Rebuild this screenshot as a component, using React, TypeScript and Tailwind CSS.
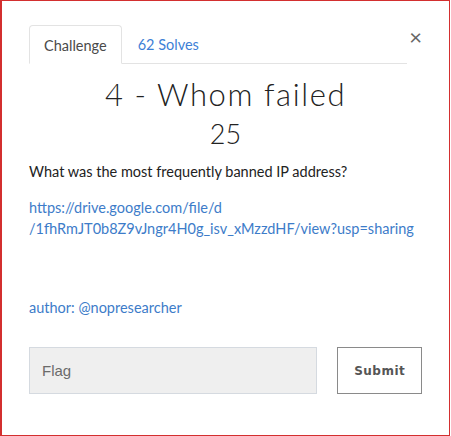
import * as React from 'react';

export default function App() {
  return (
    <div className="h-[436px] w-[451px] bg-white">
      <div className="h-[436px] w-[450px] border border-l-2 border-[#d32f2f] bg-white font-['Lato',sans-serif]">
        <div className="flex items-start pl-[27px] pr-[27px] pt-[24px]">
          {/* tabs */}
          <div className="flex w-[382px] border-b border-[#e3e3e3]">
            <div className="-mb-px rounded-t-[4px] border border-b-white border-[#e3e3e3] bg-white px-[14px] pb-[8px] pt-[11px] text-[14.5px] leading-[18px] text-[#4a4a4a]">
              Challenge
            </div>
            <div className="px-[16px] pb-[8px] pt-[11px] text-[14.5px] leading-[18px] text-[#3d7fd6]">62 Solves</div>
          </div>
          <button className="ml-[2px] mt-[1px] text-[22px] leading-[22px] text-[#666]">×</button>
        </div>

        <div className="px-[27px]">
          <h1 className="mt-[11px] text-center font-['Lato',sans-serif] text-[31px] font-light leading-[38px] tracking-[1.6px] text-[#222]">
            4 - Whom failed
          </h1>
          <div className="mt-[5px] text-center text-[27px] font-light leading-[32px] text-[#222]">25</div>

          <p className="mt-[12px] text-[14.5px] leading-[20px] text-[#222]">
            What was the most frequently banned IP address?
          </p>
          <p className="mt-[15px] break-all text-[14.5px] leading-[21px] text-[#3d7cc9]">
            https://drive.google.com/file/d
            <br />
            /1fhRmJT0b8Z9vJngr4H0g_isv_xMzzdHF/view?usp=sharing
          </p>

          <p className="mt-[59px] text-[14.5px] leading-[20px] text-[#3d7cc9]">author: @nopresearcher</p>

          <div className="mt-[29px] flex items-center">
            <input
              placeholder="Flag"
              className="h-[47px] w-[290px] border border-[#d5dae0] bg-[#efefef] px-[12px] font-['Liberation_Sans',sans-serif] text-[15px] text-[#555] placeholder:text-[#6b6b6b]"
            />
            <button className="ml-[20px] h-[47px] w-[85px] border border-[#8a8a8a] bg-white font-['DejaVu_Sans',sans-serif] text-[12px] font-bold tracking-[0.5px] text-[#555]">
              Submit
            </button>
          </div>
        </div>
      </div>
    </div>
  );
}
